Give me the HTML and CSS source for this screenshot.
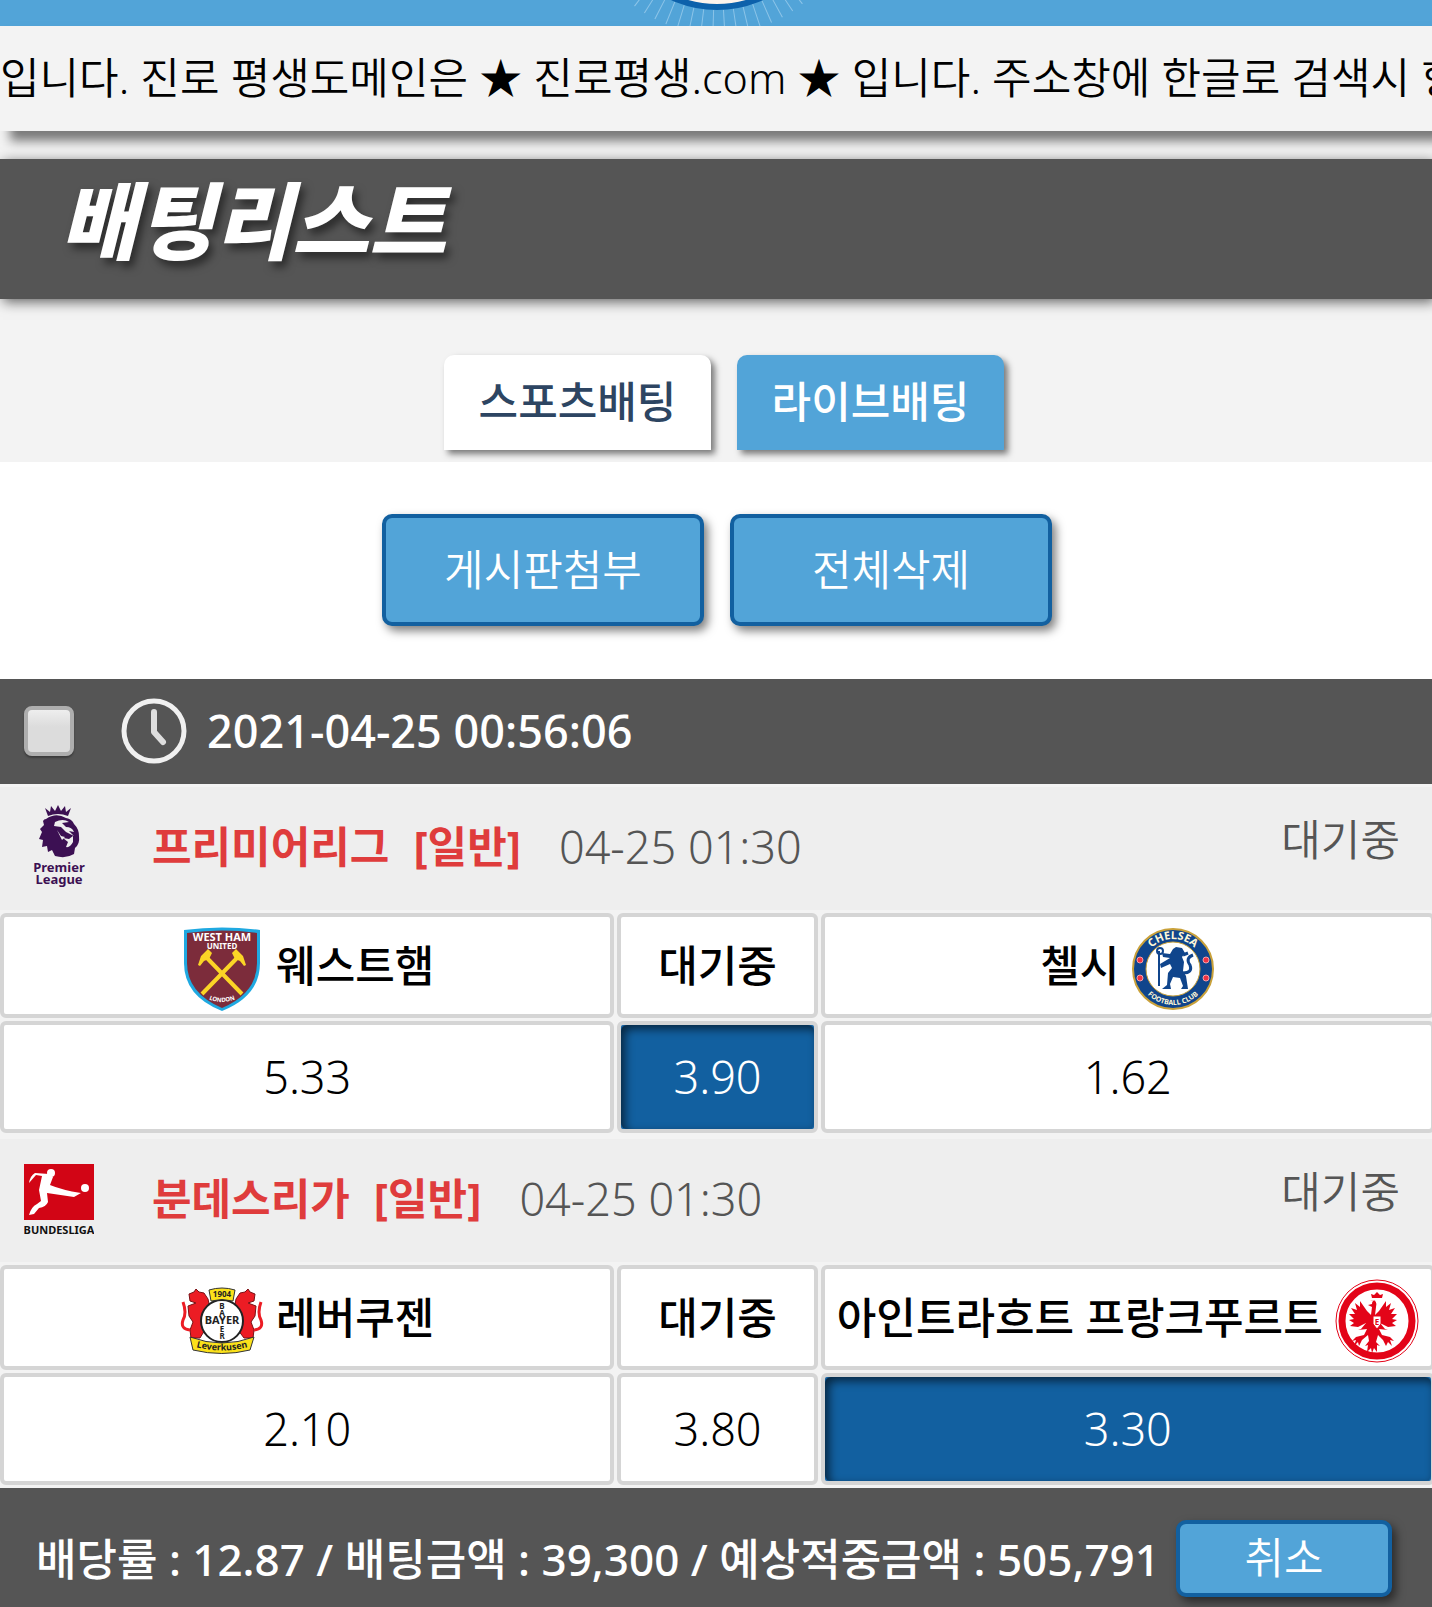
FILE: index.html
```html
<!DOCTYPE html>
<html lang="ko">
<head>
<meta charset="utf-8">
<meta name="viewport" content="width=device-width, initial-scale=1">
<title>배팅리스트</title>
<link rel="stylesheet" href="styles.css">
</head>
<body>
<header class="site-header">
  <svg class="site-logo" viewBox="0 0 280 26" aria-hidden="true">
    <circle cx="141" cy="-102" r="124" fill="none" stroke="#8cc4e8" stroke-width="24" stroke-dasharray="1 10"/>
    <circle cx="141" cy="-101" r="108" fill="#fdf3ec" stroke="#0d61ab" stroke-width="6"/>
  </svg>
</header>

<div class="notice"><p class="notice-text">입니다. 진로 평생도메인은 ★ 진로평생.com ★ 입니다. 주소창에 한글로 검색시 항상</p></div>

<h1 class="page-title">배팅리스트</h1>

<nav class="tabs">
  <a class="tab" href="#sports">스포츠배팅</a>
  <a class="tab tab-active" href="#live">라이브배팅</a>
</nav>

<main>
  <div class="actions">
    <button class="btn btn-large" type="button">게시판첨부</button>
    <button class="btn btn-large" type="button">전체삭제</button>
  </div>

  <div class="slip">
    <div class="slip-head">
      <input class="check" type="checkbox" id="slip-1">
      <label class="slip-label" for="slip-1">
        <svg class="clock" viewBox="0 0 66 66" aria-hidden="true">
          <circle cx="33" cy="33" r="30" fill="none" stroke="#f0f0f0" stroke-width="5"/>
          <path d="M33 14v20l9 10" fill="none" stroke="#dedede" stroke-width="6" stroke-linecap="round" stroke-linejoin="round"/>
        </svg>
        <span>2021-04-25 00:56:06</span>
      </label>
    </div>

    <section class="match">
      <div class="league">
        <svg class="league-logo" viewBox="0 0 70 84" role="img" aria-label="Premier League">
          <g fill="#3c1053">
            <path d="M24 11l-3-8 5 4 1-6 4 5 3-6 3 6 4-5 1 6 5-4-3 8q-10-4-20 0z"/>
            <path d="M22 14q10-7 20-1 6 1 8 6 5 5 5 12 1 8-4 12l-1 6q-8 5-19 2l-3-6-4 2-1-6-5 1 1-7-4-1 3-7-2-3 4-4-1-4q1-2 3-2z"/>
          </g>
          <path d="M31 17q8-4 14 0l-7 1 4 4q6 0 8 5l-5-1 5 5-8-4-5-5-7-1zM39 33l6 1 4-3v6q-3 6-7 5l2-5z" fill="#eee"/>
          <path d="M33 25l4 6 4 1-3 3z" fill="#eee"/>
          <text class="mark-bold" x="35" y="67" font-size="13" fill="#3c1053" text-anchor="middle">Premier</text>
          <text class="mark-bold" x="35" y="79" font-size="13" fill="#3c1053" text-anchor="middle">League</text>
        </svg>
        <strong class="league-name">프리미어리그</strong>
        <strong class="league-type">[일반]</strong>
        <time class="league-time">04-25 01:30</time>
        <span class="league-state">대기중</span>
      </div>
      <table class="odds">
        <colgroup><col><col class="col-mid"><col></colgroup>
        <tr>
          <th>
            <div class="team">
              <svg class="team-logo" viewBox="0 0 84 84" role="img" aria-label="West Ham United">
                <path d="M4 3Q42-2 80 3v33q0 33-38 48Q4 69 4 36z" fill="#1fa9e1"/>
                <path d="M7 6q35-5 70 0v30q0 30-35 45Q7 66 7 36z" fill="#7c2c3b"/>
                <g fill="none" stroke="#fbd526" stroke-width="4"><path d="M27 31l35 36M57 31L22 67"/></g>
                <path d="M18 38l3-9 7-7 4 4-3 6-5 2-4 5zM66 38l-3-9-7-7-4 4 3 6 5 2 4 5z" fill="#fbd526"/>
                <g class="mark-bold" fill="#fff" text-anchor="middle">
                  <text x="42" y="14" font-size="11">WEST HAM</text>
                  <text x="42" y="22" font-size="8">UNITED</text>
                  <path id="london" d="M28 72q14 6 28 0" fill="none"/>
                  <text font-size="6"><textPath href="#london" startOffset="50%">LONDON</textPath></text>
                </g>
              </svg>
              <span>웨스트햄</span>
            </div>
          </th>
          <th>대기중</th>
          <th>
            <div class="team">
              <span>첼시</span>
              <svg class="team-logo" viewBox="0 0 84 84" role="img" aria-label="Chelsea Football Club">
                <circle cx="42" cy="42" r="40" fill="#10458c" stroke="#c9a13a" stroke-width="2"/>
                <circle cx="42" cy="42" r="27" fill="#fff" stroke="#c9a13a" stroke-width="1"/>
                <g fill="#ef3345" stroke="#f7a0a8" stroke-width="1">
                  <circle cx="9" cy="33" r="3"/><circle cx="9" cy="51" r="3"/><circle cx="75" cy="33" r="3"/><circle cx="75" cy="51" r="3"/>
                </g>
                <path d="M28 24v35" stroke="#10458c" stroke-width="2"/>
                <circle cx="29" cy="24" r="3" fill="none" stroke="#10458c" stroke-width="2"/>
                <path d="M39 27l3-5 3-2 6 1 3 5-3 4 2 5-1 9 3 5 2 13h-7l2-3-3-8-7-1-3 7 1 5h-9l5-4 1-12 4-5-2-4-9 4-1-4 10-6-7-1-1-4z" fill="#10458c"/>
                <path d="M52 46q10 0 7-8-5-7 3-10M52 28l5-2" fill="none" stroke="#10458c" stroke-width="3"/>
                <path id="che" d="M12 42A30 30 0 0 1 72 42" fill="none"/>
                <path id="fcl" d="M6 42A36 36 0 0 0 78 42" fill="none"/>
                <text class="mark-bold" font-size="11" fill="#fff8d8" text-anchor="middle"><textPath href="#che" startOffset="50%">CHELSEA</textPath></text>
                <text class="mark-bold" font-size="7" fill="#fff8d8" text-anchor="middle"><textPath href="#fcl" startOffset="50%">FOOTBALL CLUB</textPath></text>
              </svg>
            </div>
          </th>
        </tr>
        <tr>
          <td>5.33</td>
          <td class="picked">3.90</td>
          <td>1.62</td>
        </tr>
      </table>
    </section>

    <section class="match">
      <div class="league">
        <svg class="league-logo" viewBox="0 0 70 84" role="img" aria-label="Bundesliga">
          <rect x="0" y="7" width="70" height="56" fill="#d20515"/>
          <circle cx="27" cy="16" r="4" fill="#fff"/><circle cx="61" cy="31" r="4" fill="#fff"/>
          <path d="M25 17l4 3-3 8q12 5 31 8l-7 4-27-4 1 9q-2 5-9 6l-5 6-5 1q2-8 8-11l4-3-2-11 3-14-6-1-7 8q1-7 6-10z" fill="#fff"/>
          <text class="mark-bold" x="35" y="77" font-size="11" fill="#111" text-anchor="middle">BUNDESLIGA</text>
        </svg>
        <strong class="league-name">분데스리가</strong>
        <strong class="league-type">[일반]</strong>
        <time class="league-time">04-25 01:30</time>
        <span class="league-state">대기중</span>
      </div>
      <table class="odds">
        <colgroup><col><col class="col-mid"><col></colgroup>
        <tr>
          <th>
            <div class="team">
              <svg class="team-logo" viewBox="0 -7 84 84" role="img" aria-label="Bayer Leverkusen">
                <g fill="#ec1c24" stroke="#7a1015" stroke-width="1">
                  <path d="M28 13l-4-6-5-1-3-3-2 3-5 2 1 7 6 2-8 3 1 10 4 6-3 8 1 8h9l12-20z"/>
                  <path d="M56 13l4-6 5-1 3-3 2 3 5 2-1 7-6 2 8 3-1 10-4 6 3 8-1 8h-9L52 36z"/>
                </g>
                <path d="M10 44Q0 43 3 34q4-7 0-18M74 44q10-1 7-10-4-7 0-18" fill="none" stroke="#ec1c24" stroke-width="3"/>
                <circle cx="42" cy="35" r="21" fill="#fff" stroke="#222" stroke-width="2"/>
                <g fill="#fbe11a" stroke="#333" stroke-width="1">
                  <path d="M29 4q13-4 26 0l-2 11q-11-3-22 0z"/>
                  <path d="M10 51q32 12 64 0l-4 13q-28 7-57 0z"/>
                </g>
                <g class="mark-bold" fill="#222" text-anchor="middle" font-size="8">
                  <text x="42" y="11">1904</text>
                  <text font-size="8"><tspan x="42" y="23">B</tspan><tspan x="42" y="30">A</tspan><tspan x="42" y="38" font-size="11">BAYER</tspan><tspan x="42" y="46">E</tspan><tspan x="42" y="53">R</tspan></text>
                  <path id="lev" d="M12 60q30 9 60 0" fill="none"/>
                  <text font-size="9"><textPath href="#lev" startOffset="50%">Leverkusen</textPath></text>
                </g>
              </svg>
              <span>레버쿠젠</span>
            </div>
          </th>
          <th>대기중</th>
          <th>
            <div class="team">
              <span>아인트라흐트 프랑크푸르트</span>
              <svg class="team-logo" viewBox="0 0 84 84" role="img" aria-label="Eintracht Frankfurt">
                <circle cx="42" cy="42" r="41" fill="#fff" stroke="#e30418" stroke-width="1"/>
                <circle cx="42" cy="42" r="35" fill="#fff" stroke="#e30418" stroke-width="7"/>
                <g fill="#e30418">
                  <path d="M37 19l-1-4 3 1 3-3 3 3 3-1-1 4z"/>
                  <path d="M42 22q-5-2-5 3l-4 1 4 2-1 8-4-4-7-10 0 6-5-4 2 7-6-2 4 6-6 0 5 5-5 1 5 3-4 3 8 1 8-4-5 6-3 1 9-1-3 6-8 2-4 4 4-1-2 6 4-4 1 4 3-6 6-5 1 6-4 5 3-1-1 7 4-4 1 5 2-5 3 4v-7l3 1-4-4 2-7 5 5 3 6 2-4 4 4-2-6 4 1-4-4-8-2-3-6 9 1-3-1-5-6 8 4 8-1-4-3 5-3-5-1 5-5-6 0 4-6-6 2 2-7-5 4 0-6-7 10-4 4 1-8q2-8-6-7z"/>
                </g>
                <path d="M38 37h8v8l-4 5-4-5z" fill="#fff" stroke="#e30418" stroke-width="1"/>
                <text class="mark-bold" x="42" y="46" font-size="8" fill="#e30418" text-anchor="middle">E</text>
              </svg>
            </div>
          </th>
        </tr>
        <tr>
          <td>2.10</td>
          <td>3.80</td>
          <td class="picked">3.30</td>
        </tr>
      </table>
    </section>
  </div>

  <div class="summary">
    <span class="summary-text">배당률 : 12.87 / 배팅금액 : 39,300 / 예상적중금액 : 505,791</span>
    <button class="btn btn-small" type="button">취소</button>
  </div>
</main>
</body>
</html>
```
FILE: styles.css
```css
* {
  box-sizing: border-box;
}

body {
  margin: 0;
  overflow-x: hidden;
  background: #f3f3f3;
  color: #000;
  font-family: "Noto Sans", "Noto Sans CJK KR", sans-serif;
  font-size: 43px;
  font-weight: 350;
  line-height: 56px;
}

.site-header {
  display: flex;
  justify-content: center;
  height: 26px;
  overflow: hidden;
  background: #52a4d8;
}

.site-logo {
  width: 280px;
  height: 26px;
}

.notice {
  padding: 24px 0 25px;
  background: #f3f3f3;
  box-shadow: 10px 10px 10px rgba(0, 0, 0, .5);
}

.notice-text {
  margin: 0;
  overflow: hidden;
  white-space: nowrap;
}

.page-title {
  position: relative;
  margin: 28px 0 0;
  padding: 10px 60px 26px;
  background: #555;
  box-shadow: 3px 3px 12px rgba(0, 0, 0, .6);
  color: #fff;
  font-size: 84px;
  font-style: italic;
  font-weight: 900;
  line-height: 104px;
  text-shadow: 4px 6px 8px rgba(0, 0, 0, .5);
}

.tabs {
  display: flex;
  justify-content: center;
  gap: 26px;
  padding: 56px 0 12px 16px;
}

.tab {
  width: 267px;
  padding: 19px 0 20px;
  border-radius: 10px 10px 0 0;
  background: #fff;
  box-shadow: 4px 4px 6px rgba(0, 0, 0, .5);
  color: #2d4562;
  font-weight: 500;
  text-align: center;
  text-decoration: none;
}

.tab-active {
  background: #52a4d8;
  color: #fff;
}

.actions {
  display: flex;
  justify-content: center;
  gap: 26px;
  padding: 52px 0 53px 2px;
  background: #fff;
}

.btn {
  border: 4px solid #1260a0;
  border-radius: 10px;
  background: #52a4d8;
  box-shadow: 4px 5px 10px rgba(0, 0, 0, .5);
  color: #fff;
  font: inherit;
  text-align: center;
}

.btn-large {
  width: 322px;
  padding: 24px 0;
}

.btn-small {
  flex: none;
  width: 216px;
  padding: 6px 0 7px;
}

.slip {
  display: flex;
  flex-direction: column;
  gap: 3px;
  overflow: hidden;
}

.slip-head {
  display: flex;
  align-items: center;
  gap: 47px;
  height: 105px;
  padding: 0 24px 2px;
  background: #555;
  color: #fff;
  font-size: 45px;
  font-weight: 500;
}

.slip-label {
  display: flex;
  align-items: center;
  gap: 20px;
}

.clock {
  width: 66px;
  height: 66px;
}

.check {
  appearance: none;
  width: 50px;
  height: 50px;
  margin: 0;
  border: 4px solid #aeaeae;
  border-radius: 8px;
  background: linear-gradient(#eee, #dcdcdc 40%);
  box-shadow: 0 2px 2px rgba(0, 0, 0, .3);
}

.league {
  display: flex;
  align-items: center;
  height: 123px;
  padding: 0 32px 4px 24px;
  background: #eee;
  color: #555;
}

.league-logo {
  flex: none;
  width: 70px;
  height: 84px;
  margin-right: 58px;
}

.league-name,
.league-type {
  color: #df3c3c;
  font-weight: 700;
}

.league-name {
  margin-right: 24px;
}

.league-type {
  margin-right: 38px;
}

.league-time {
  font-size: 45px;
}

.league-state {
  margin: 0 0 14px auto;
}

.odds {
  width: calc(100% + 9px);
  margin-left: -3px;
  border-spacing: 3px;
  table-layout: fixed;
}

.col-mid {
  width: 14%;
}

.odds th,
.odds td {
  padding: 0;
  border: 4px solid #d5d5d5;
  border-radius: 6px;
  background: #fff;
  text-align: center;
  white-space: nowrap;
}

.odds th {
  height: 105px;
  font-weight: 500;
}

.odds td {
  height: 112px;
  font-size: 45px;
}

.odds .picked {
  background: #1260a0;
  box-shadow: inset 4px 4px 10px rgba(0, 0, 0, .6);
  color: #fff;
}

.team {
  display: flex;
  align-items: center;
  justify-content: center;
  gap: 12px;
}

.team-logo {
  flex: none;
  width: 84px;
  height: 84px;
  margin-top: 6px;
}

.mark-bold {
  font-family: "Noto Sans", sans-serif;
  font-weight: 700;
}

.summary {
  display: flex;
  align-items: center;
  justify-content: space-between;
  padding: 32px 40px 10px 36px;
  background: #555;
  color: #fff;
}

.summary-text {
  font-size: 44px;
  font-weight: 500;
  white-space: nowrap;
}
```
